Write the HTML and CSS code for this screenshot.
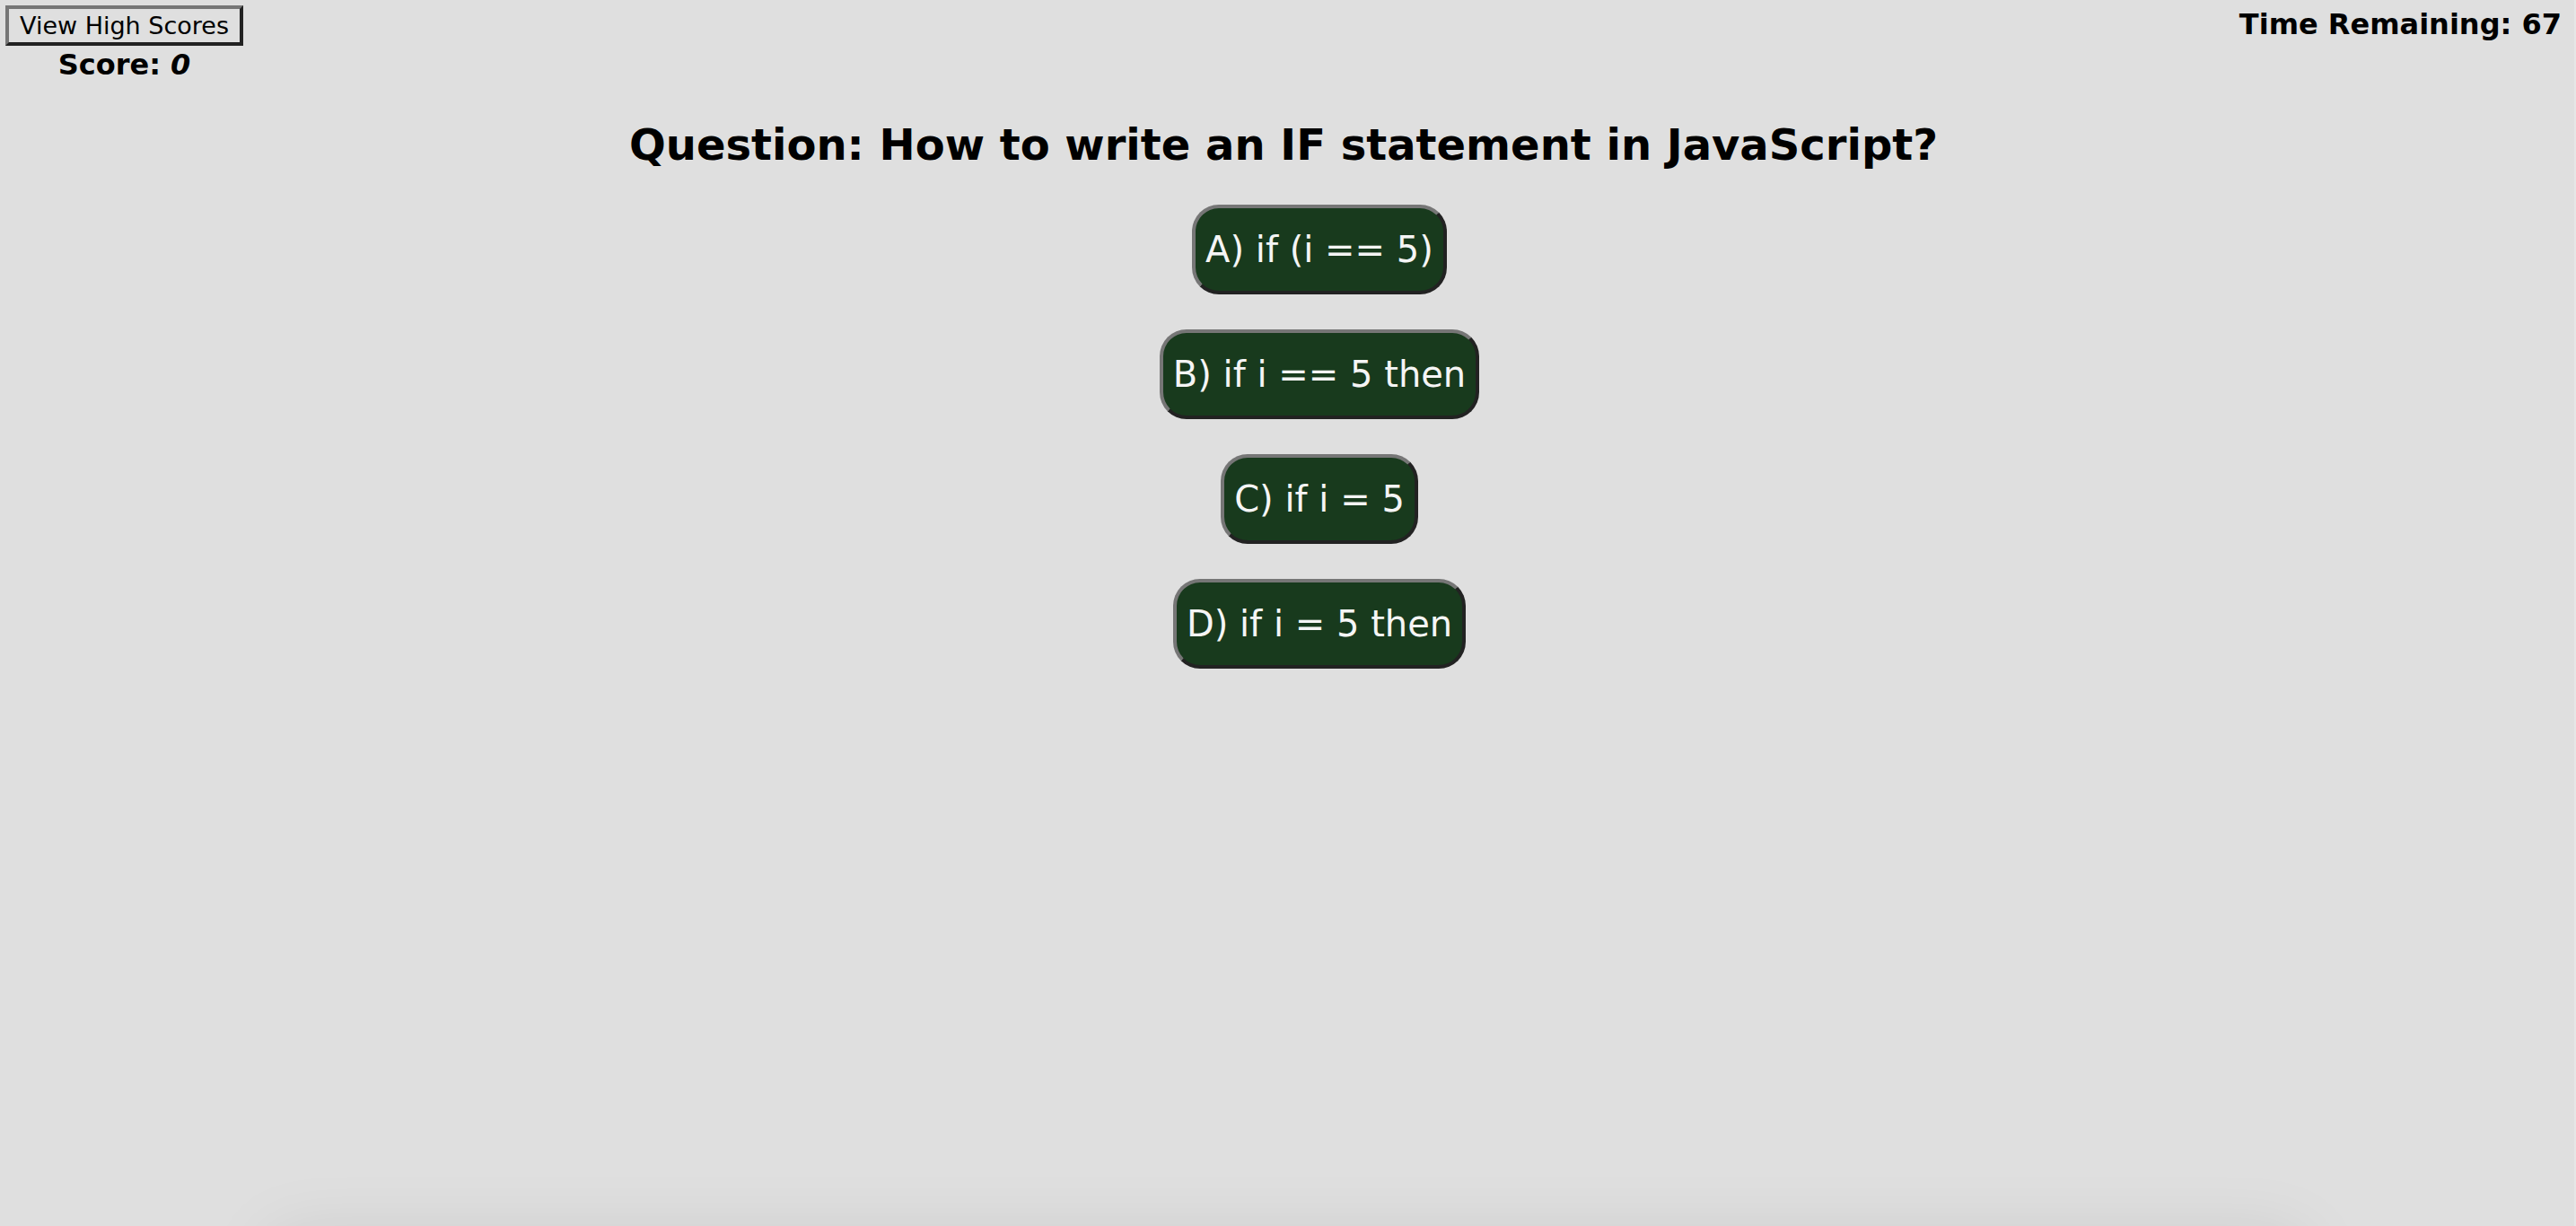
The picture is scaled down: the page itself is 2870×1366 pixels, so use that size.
FILE: index.html
```html
<!DOCTYPE html>
<html lang="en">
<head>
<meta charset="utf-8">
<title>Code Quiz</title>
<link rel="stylesheet" href="styles.css">
</head>
<body>
<header class="top-bar">
  <div class="scores">
    <button type="button" class="high-scores">View High Scores</button>
    <p class="status">Score: <em>0</em></p>
  </div>
  <p class="status">Time Remaining: 67</p>
</header>
<main class="quiz">
  <h1 class="question">Question: How to write an IF statement in JavaScript?</h1>
  <ul class="answers">
    <li><button type="button" class="answer">A) if (i == 5)</button></li>
    <li><button type="button" class="answer">B) if i == 5 then</button></li>
    <li><button type="button" class="answer">C) if i = 5</button></li>
    <li><button type="button" class="answer">D) if i = 5 then</button></li>
  </ul>
</main>
</body>
</html>
```

FILE: styles.css
```css
* {
  box-sizing: border-box;
}

body {
  position: relative;
  min-height: 100vh;
  margin: 0;
  border-right: 2px solid #e6e6e6;
  background: #dfdfdf;
  color: #000;
  font-family: Verdana, "DejaVu Sans", sans-serif;
}

/* soft shadow along the lower edge of the window */
body::after {
  content: "";
  position: absolute;
  bottom: 0;
  left: 12%;
  right: 12%;
  height: 0;
  box-shadow: 0 54px 80px 40px rgba(0, 0, 0, 0.1);
}

.top-bar {
  display: flex;
  justify-content: space-between;
  align-items: flex-start;
  padding: 6px 14px 0 6px;
}

.scores {
  display: flex;
  flex-direction: column;
  align-items: center;
}

.high-scores {
  height: 45px;
  padding: 0 12px;
  border: 4px solid;
  border-color: #767676 #222 #222 #767676;
  background: transparent;
  color: #000;
  font-family: inherit;
  font-size: 27px;
  line-height: 36px;
}

.status {
  margin: 0;
  font-size: 32px;
  font-weight: bold;
  line-height: 42px;
}

.quiz {
  padding: 38px 8px 0 0;
  text-align: center;
}

.question {
  margin: 0;
  font-size: 48px;
  line-height: 60px;
}

.answers {
  display: flex;
  flex-direction: column;
  align-items: center;
  gap: 39px;
  margin: 37px 0 0;
  padding: 0 0 0 80px;
  list-style: none;
}

.answer {
  display: block;
  height: 100px;
  padding: 0 11px;
  border: 4px solid;
  border-color: #767676 #222 #222 #767676;
  border-radius: 30px;
  background: #183a1d;
  color: #f5f5f5;
  font-family: inherit;
  font-size: 40px;
}
```
